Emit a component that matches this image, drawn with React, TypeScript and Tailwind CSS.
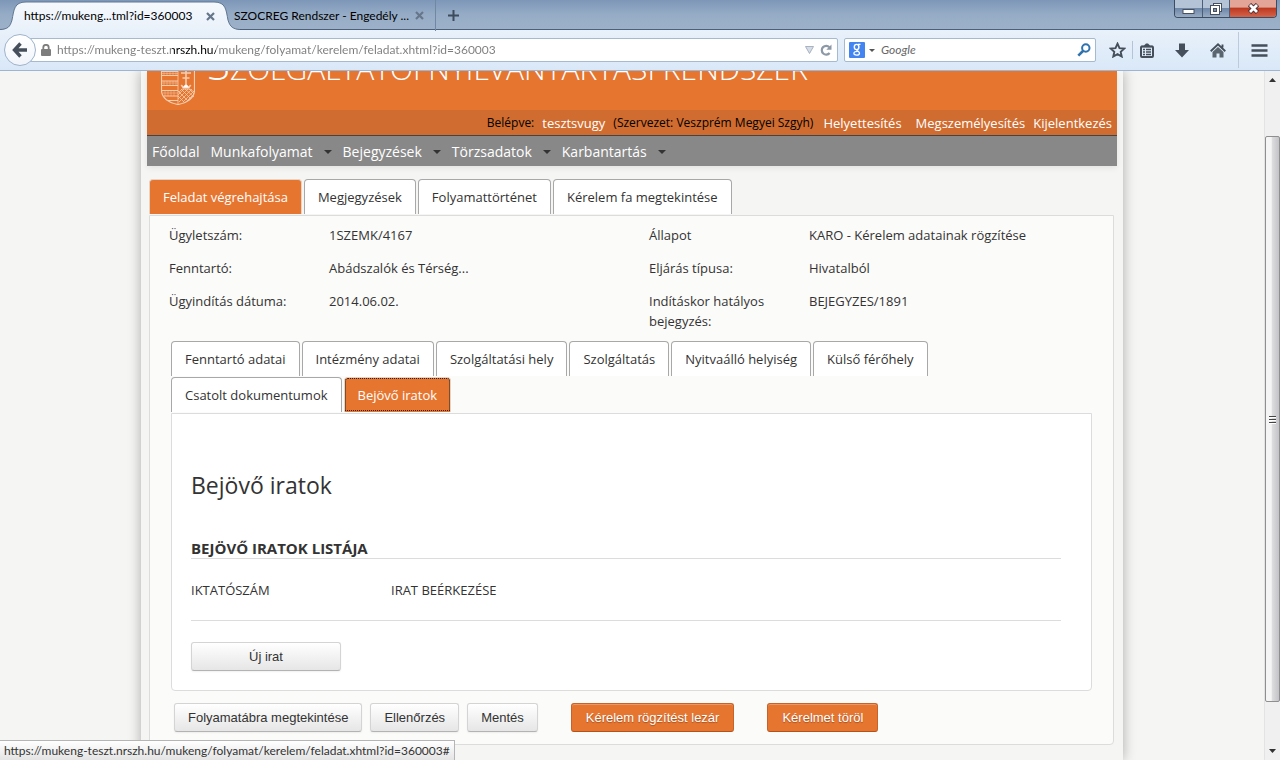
import type { ReactNode } from "react";

const ADDRESS = "https://mukeng-teszt.nrszh.hu/mukeng/folyamat/kerelem/feladat.xhtml?id=360003";

function CloseMark() {
  return (
    <svg width="9" height="9" viewBox="0 0 9 9" aria-hidden="true">
      <path d="M1 1l7 7M8 1l-7 7" stroke="#66768a" strokeWidth="2.2" />
    </svg>
  );
}

function TitleBar() {
  return (
    <div className="flex h-[30px] shrink-0 items-start justify-between border-b border-[#4b617b] bg-linear-to-b from-[#7d97b8] via-[#96acc6] to-[#9db1c9]">
      <div className="flex h-[29px] items-center text-xs leading-4 text-black">
        <div className="relative h-[30px] w-60 shrink-0 self-start">
          <svg className="absolute inset-0" width="240" height="30" viewBox="0 0 240 30" aria-hidden="true">
            <defs>
              <linearGradient id="tab" x1="0" y1="0" x2="0" y2="1">
                <stop offset="0" stopColor="#f5f9fd" />
                <stop offset="1" stopColor="#e9f1fa" />
              </linearGradient>
            </defs>
            <path
              d="M0 30C8 29 10 27 12 20C14 10 14 2 26 2H214C226 2 226 10 228 20C230 27 233 29 240 30Z"
              fill="url(#tab)"
            />
            <path
              d="M0 29.500C8 29 10 27 12 20C14 10 14 2 26 2H214C226 2 226 10 228 20C230 27 233 29 240 29.500"
              fill="none"
              stroke="#5f7690"
            />
          </svg>
          <div className="relative flex h-8 items-center justify-between pr-[25px] pl-6">
            <a href="#tab-1">https://mukeng...tml?id=360003</a>
            <button type="button" aria-label="Lap bezárása">
              <CloseMark />
            </button>
          </div>
        </div>
        <div className="-ml-1.5 flex h-8 w-[202px] items-center justify-between border-r border-[#7188a3] pt-0.5 pr-[11px]">
          <a href="#tab-2" className="whitespace-nowrap">
            SZOCREG Rendszer - Engedély ...
          </a>
          <button type="button" aria-label="Lap bezárása">
            <CloseMark />
          </button>
        </div>
        <button type="button" aria-label="Új lap" className="ml-3 pt-0.5">
          <svg width="11" height="11" viewBox="0 0 11 11" aria-hidden="true">
            <path d="M5.500 0v11M0 5.500h11" stroke="#3d4b5c" strokeWidth="2" />
          </svg>
        </button>
      </div>
      <div className="mr-[3px] flex h-[18px] overflow-hidden rounded-b border border-t-0 border-[#3c4d62]">
        <button
          type="button"
          aria-label="Kis méret"
          className="flex w-7 items-center justify-center border-r border-[#4b5f78] bg-linear-to-b from-[#b4c3d6] from-45% via-[#6f88a8] via-50% to-[#98abc3]"
        >
          <svg width="13" height="10" viewBox="0 0 13 10" aria-hidden="true">
            <rect x="1" y="5.500" width="11" height="4" fill="#fff" stroke="#46505f" />
          </svg>
        </button>
        <button
          type="button"
          aria-label="Előző méret"
          className="flex w-[27px] items-center justify-center border-r border-[#4b5f78] bg-linear-to-b from-[#b4c3d6] from-45% via-[#6f88a8] via-50% to-[#98abc3]"
        >
          <svg width="13" height="13" viewBox="0 0 13 13" aria-hidden="true">
            <rect x="3.500" y="1.500" width="8" height="8" fill="#fff" stroke="#46505f" />
            <rect x="0.500" y="3.500" width="9" height="9" fill="#fff" stroke="#46505f" />
            <rect x="3.500" y="6.500" width="3" height="3" fill="#7f93ad" stroke="#46505f" />
          </svg>
        </button>
        <button
          type="button"
          aria-label="Bezárás"
          className="flex w-[46px] items-center justify-center bg-linear-to-b from-[#e3a597] from-40% via-[#bd3a20] via-50% to-[#d4634a]"
        >
          <svg width="13" height="11" viewBox="0 0 13 11" aria-hidden="true">
            <path d="M2.500 1.500l8 8M10.500 1.500l-8 8" stroke="#4f3038" strokeWidth="4.600" />
            <path d="M3 2l7 7M10 2l-7 7" stroke="#fff" strokeWidth="2.800" />
          </svg>
        </button>
      </div>
    </div>
  );
}

function ToolButton({ label, children }: { label: string; children: ReactNode }) {
  return (
    <button type="button" aria-label={label} className="flex w-5 shrink-0 items-center justify-center">
      {children}
    </button>
  );
}

function Toolbar() {
  return (
    <div className="flex h-[41px] shrink-0 items-center border-b border-[#9db5d0] bg-linear-to-b from-[#e9f1fa] to-[#d9e8f8] pl-1">
      <button
        type="button"
        aria-label="Vissza"
        className="z-10 flex size-8 shrink-0 items-center justify-center rounded-full border border-[#9fb3ca] bg-linear-to-b from-white to-[#f0f5fb]"
      >
        <svg width="16" height="16" viewBox="0 0 16 16" aria-hidden="true">
          <path d="M8.500 1.500L2.500 8l6 6.500M3 8h12" fill="none" stroke="#454f5b" strokeWidth="3.400" />
        </svg>
      </button>
      <div className="-ml-1.5 flex h-6 min-w-0 flex-1 items-center rounded-r-xs border border-[#a5b9cf] bg-white pr-[5px] pl-2.5">
        <svg className="shrink-0" width="10" height="12" viewBox="0 0 10 12" aria-hidden="true">
          <path d="M2.300 6V3.500a2.700 2.700 0 015.400 0V6" fill="none" stroke="#7d7d7d" strokeWidth="1.800" />
          <rect y="5" width="10" height="7" rx="1" fill="#7d7d7d" />
        </svg>
        <input
          type="text"
          aria-label="Cím"
          defaultValue={ADDRESS}
          className="ml-1.5 min-w-0 flex-1 bg-[linear-gradient(to_right,#7c7c7c_115px,#000_115px,#000_159px,#7c7c7c_159px)] bg-clip-text text-xs leading-4 text-transparent outline-none"
        />
        <button type="button" aria-label="Korábbi címek">
          <svg width="9" height="8" viewBox="0 0 9 8" aria-hidden="true">
            <path d="M.5.5h8L4.500 7.500z" fill="#d6dde5" stroke="#a7b3c0" />
          </svg>
        </button>
        <button type="button" aria-label="Frissítés" className="ml-1.5">
          <svg width="12" height="12" viewBox="0 0 12 12" aria-hidden="true">
            <path d="M9.600 9a4.400 4.400 0 11-.2-5.800" fill="none" stroke="#8d99a7" strokeWidth="2.200" />
            <path d="M11.500.5v5.200H6.300z" fill="#8d99a7" />
          </svg>
        </button>
      </div>
      <div className="ml-1.5 flex h-6 w-[252px] shrink-0 items-center rounded-xs border border-[#a5b9cf] bg-white px-1">
        <button type="button" aria-label="Keresőszolgáltatás" className="flex items-center gap-1">
          <svg width="16" height="16" viewBox="0 0 16 16" aria-hidden="true">
            <rect width="16" height="16" rx="1" fill="#4384f0" />
            <ellipse cx="7.600" cy="5" rx="2.300" ry="2.600" fill="none" stroke="#fff" strokeWidth="1.400" />
            <path
              d="M9 2.400h2.500M8.200 7.600c-1.500 1 2.600 1.700 2.300 3.700-.3 2.400-5.600 2.300-5.600.2 0-1.500 1.700-2.100 3.700-2.100"
              fill="none"
              stroke="#fff"
              strokeWidth="1.300"
            />
          </svg>
          <svg width="6" height="3" viewBox="0 0 6 3" aria-hidden="true">
            <path d="M0 0h6L3 3z" fill="#555" />
          </svg>
        </button>
        <input
          type="search"
          aria-label="Keresés"
          placeholder="Google"
          className="ml-1.5 min-w-0 flex-1 text-xs leading-4 italic outline-none placeholder:text-[#666]"
        />
        <button type="button" aria-label="Keresés indítása">
          <svg width="14" height="14" viewBox="0 0 14 14" aria-hidden="true">
            <circle cx="8.800" cy="5" r="3.700" fill="none" stroke="#2f72ad" strokeWidth="2" />
            <path d="M6.200 7.800L1.300 12.600" stroke="#2f72ad" strokeWidth="2.600" />
          </svg>
        </button>
      </div>
      <div className="flex shrink-0 items-center pr-[11px] pl-[11px]">
        <ToolButton label="Könyvjelzőzés">
          <svg width="17" height="16" viewBox="0 0 17 16" aria-hidden="true">
            <path
              d="M8.500 1.700l2 4.400 4.800.5-3.600 3.200 1 4.700-4.200-2.400-4.200 2.400 1-4.700L1.700 6.600l4.800-.5z"
              fill="none"
              stroke="#454f5b"
              strokeWidth="1.900"
            />
          </svg>
        </ToolButton>
        <span className="mr-1 ml-[5px] h-[18px] w-px bg-[#b3c4d7]" />
        <ToolButton label="Könyvjelzők">
          <svg width="14" height="15" viewBox="0 0 14 15" aria-hidden="true">
            <path d="M4 2.500L6 .5h2l2 2v1H4z" fill="#454f5b" />
            <rect x="1" y="3.500" width="12" height="10.500" rx="1" fill="none" stroke="#454f5b" strokeWidth="2" />
            <path d="M1 3.500h12M3 6.500h2M3 9h2M3 11.500h2M6 6.500h5M6 9h5M6 11.500h5" stroke="#454f5b" strokeWidth="1.300" />
          </svg>
        </ToolButton>
        <span className="w-[15px]" />
        <ToolButton label="Letöltések">
          <svg width="14" height="15" viewBox="0 0 14 15" aria-hidden="true">
            <path d="M4 .5h6V7h4l-7 7.500L0 7h4z" fill="#454f5b" />
          </svg>
        </ToolButton>
        <span className="w-4" />
        <ToolButton label="Kezdőlap">
          <svg width="16" height="15" viewBox="0 0 16 15" aria-hidden="true">
            <path d="M.7 8.200L8 1.400l7.300 6.800M12.500 1.500v3" fill="none" stroke="#454f5b" strokeWidth="1.900" />
            <path d="M2.500 9L8 4l5.500 5v5.500H9.500v-4h-3v4h-4z" fill="#5b6570" />
          </svg>
        </ToolButton>
        <span className="mx-2.5 h-9 w-px bg-[#bccbdc]" />
        <ToolButton label="Menü">
          <svg width="17" height="13" viewBox="0 0 17 13" aria-hidden="true">
            <path d="M.5 1.500h16M.5 6.500h16M.5 11.500h16" stroke="#454f5b" strokeWidth="2.600" />
          </svg>
        </ToolButton>
      </div>
    </div>
  );
}

function Crest() {
  return (
    <svg width="34" height="46" viewBox="0 0 34 46" className="shrink-0" aria-hidden="true">
      <g fill="none" stroke="#f6cdaf">
        <path d="M.5 0V31C.5 39 8 44 17 45.500C26 44 33.500 39 33.500 31V0" strokeWidth="1.200" />
        <path d="M17 0v45" strokeWidth=".8" />
        <path d="M1 12.500h16M1 16.500h16M1 22h16M1 26.500h16M1 31.500h16M3 37h14M7 41.500h10" />
        <path
          d="M1 14.500h16M1 24h16M2 34h15M3 12v4M6 12v4M9 12v4M12 12v4M15 12v4M3 22v4M6 22v4M9 22v4M12 22v4M15 22v4M4 32v5M7 32v5M10 32v5M13 32v5"
          strokeWidth=".6"
          opacity=".8"
        />
        <path d="M25 9v18M20 14h10M21.500 19h7" strokeWidth="1.600" />
        <path d="M20 26l2 3h6l2-3-2.500 1.500L25 25l-2.500 2.500z" fill="#fff" />
        <path
          d="M18 33l3-3h8l4 3M17 36l6-6M17 40l10-10M18 43l13-13M22 43l11-11M27 41l6-6M17 32l10 10M20 30l10 10M24 30l9 8M28 30l5 5M17 37l6 6"
          strokeWidth=".8"
        />
      </g>
    </svg>
  );
}

const menu = ["Munkafolyamat", "Bejegyzések", "Törzsadatok", "Karbantartás"];

function SiteHeader() {
  return (
    <header className="shadow-[0_2px_6px_rgba(0,0,0,0.08)]">
      <div className="flex h-[39px] items-end bg-[#e67530] pb-[5px] pl-3.5">
        <Crest />
        <h1 className="ml-3 pb-4 text-3xl leading-10 font-light whitespace-nowrap text-white">
          <span className="text-[42px]">S</span>ZOLGÁLTATÓI NYILVÁNTARTÁSI RENDSZER
        </h1>
      </div>
      <div className="flex h-[26px] items-center justify-end border-b border-[#444] bg-[#d06c2f] pt-px pr-[5px] text-[13px] leading-5 text-white">
        <span className="text-xs text-black">Belépve:</span>
        <a href="#felhasznalo" className="ml-2">tesztsvugy</a>
        <span className="ml-2 text-xs text-black">(Szervezet: Veszprém Megyei Szgyh)</span>
        <a href="#helyettesites" className="ml-2.5">Helyettesítés</a>
        <a href="#megszemelyesites" className="ml-3.5">Megszemélyesítés</a>
        <a href="#kijelentkezes" className="ml-2">Kijelentkezés</a>
      </div>
      <nav className="flex h-[30px] items-center bg-[#888] pt-0.5 pl-[5px] text-sm leading-5 text-white">
        <a href="#fooldal" className="mr-[11px]">Főoldal</a>
        {menu.map((label) => (
          <button key={label} type="button" className="mr-[11px] flex items-center gap-[11px]">
            {label}
            <svg width="8" height="4" viewBox="0 0 8 4" aria-hidden="true">
              <path d="M0 0h8L4 4z" fill="#333" />
            </svg>
          </button>
        ))}
      </nav>
    </header>
  );
}

function Tab({ label, active, focused }: { label: string; active?: boolean; focused?: boolean }) {
  const tone = active
    ? "border-[#e5d3c6] bg-[#e67530] text-white"
    : "border-[#a8a8a8] bg-white text-[#333]";
  const ring = focused ? "outline outline-dotted outline-[#222] -outline-offset-2" : "";
  return (
    <button
      type="button"
      role="tab"
      aria-selected={!!active}
      className={`h-[35px] rounded-t border border-b-0 px-[13px] text-[13px] leading-5 whitespace-nowrap ${tone} ${ring}`}
    >
      {label}
    </button>
  );
}

const facts = [
  ["Ügyletszám:", "1SZEMK/4167"],
  ["Állapot", "KARO - Kérelem adatainak rögzítése"],
  ["Fenntartó:", "Abádszalók és Térség..."],
  ["Eljárás típusa:", "Hivatalból"],
  ["Ügyindítás dátuma:", "2014.06.02."],
  ["Indításkor hatályos bejegyzés:", "BEJEGYZES/1891"],
];

function ActionButton({ label, primary, wide }: { label: string; primary?: boolean; wide?: boolean }) {
  const tone = primary
    ? "border-[#c9622a] border-b-[#b4521d] bg-[#e67530] px-3.5 text-white shadow-[inset_0_1px_0_rgba(255,255,255,0.25)] [text-shadow:0_1px_1px_rgba(0,0,0,0.3)]"
    : "border-[#d4d4d4] border-b-[#b3b3b3] bg-linear-to-b from-white to-[#e6e6e6] px-[13px] text-[#333] shadow-[0_1px_2px_rgba(0,0,0,0.06)]";
  return (
    <button
      type="button"
      className={`h-[29px] rounded-[3px] border font-['Liberation_Sans',sans-serif] text-[13px] leading-5 ${tone} ${wide ? "w-[150px]" : ""}`}
    >
      {label}
    </button>
  );
}

function IncomingDocuments() {
  return (
    <section className="rounded-b border border-[#dcdcdc] bg-white pt-[55px] pr-[30px] pb-[19px] pl-[19px]">
      <h2 className="text-[23px] leading-8">Bejövő iratok</h2>
      <h3 className="mt-[37px] border-b border-[#dcdcdc] text-[15px] leading-5 font-bold uppercase">
        Bejövő iratok listája
      </h3>
      <table className="w-full table-fixed border-b border-[#dcdcdc]">
        <thead>
          <tr className="text-left">
            <th className="w-[200px] pt-[21px] pb-5 font-normal">IKTATÓSZÁM</th>
            <th className="pt-[21px] pb-5 font-normal">IRAT BEÉRKEZÉSE</th>
          </tr>
        </thead>
      </table>
      <div className="mt-[21px] flex">
        <ActionButton label="Új irat" wide />
      </div>
    </section>
  );
}

function TaskPage() {
  return (
    <main className="mx-[2px] mt-[13px] text-[13px] leading-5 text-[#333]">
      <div role="tablist" className="flex flex-wrap gap-x-0.5 pb-px">
        <Tab label="Feladat végrehajtása" active />
        <Tab label="Megjegyzések" />
        <Tab label="Folyamattörténet" />
        <Tab label="Kérelem fa megtekintése" />
      </div>
      <div className="mr-px rounded-b border border-[#dcdcdc] bg-[#fbfbf9] pt-[9px] pb-3">
        <dl className="ml-[19px] grid grid-cols-[160px_320px_160px_1fr] gap-y-[13px]">
          {facts.map(([label, value]) => (
            <div key={label} className="contents">
              <dt className="max-w-[140px]">{label}</dt>
              <dd>{value}</dd>
            </div>
          ))}
        </dl>
        <div className="mx-[21px] mt-2.5">
          <div role="tablist" className="flex flex-wrap gap-x-0.5 gap-y-px pb-px">
            <Tab label="Fenntartó adatai" />
            <Tab label="Intézmény adatai" />
            <Tab label="Szolgáltatási hely" />
            <Tab label="Szolgáltatás" />
            <Tab label="Nyitvaálló helyiség" />
            <Tab label="Külső férőhely" />
            <Tab label="Csatolt dokumentumok" />
            <Tab label="Bejövő iratok" active focused />
          </div>
          <IncomingDocuments />
        </div>
        <div className="mt-3 ml-6 flex gap-[33px]">
          <div className="flex gap-2">
            <ActionButton label="Folyamatábra megtekintése" />
            <ActionButton label="Ellenőrzés" />
            <ActionButton label="Mentés" />
          </div>
          <ActionButton label="Kérelem rögzítést lezár" primary />
          <ActionButton label="Kérelmet töröl" primary />
        </div>
      </div>
    </main>
  );
}

function ScrollRail() {
  return (
    <div className="flex w-4 shrink-0 flex-col items-center border-l border-[#e3e3e3] bg-[#f0f0f0]" aria-hidden="true">
      <svg className="my-[7px]" width="7" height="4" viewBox="0 0 7 4">
        <path d="M0 4h7L3.500 0z" fill="#333" />
      </svg>
      <div className="mt-[47px] mb-10 flex w-full flex-1 items-center justify-center rounded-xs border border-[#8f8f8f] bg-linear-to-r from-[#f5f5f5] from-40% via-[#dcdcde] via-50% to-[#c3c3c8]">
        <svg width="8" height="9" viewBox="0 0 8 9">
          <path d="M0 1.500h7M0 4.500h7M0 7.500h7" stroke="#444" />
          <path d="M0 2.500h7M0 5.500h7M0 8.500h7" stroke="#fff" />
        </svg>
      </div>
      <svg className="my-[7px]" width="7" height="4" viewBox="0 0 7 4">
        <path d="M0 0h7L3.500 4z" fill="#333" />
      </svg>
    </div>
  );
}

export default function App() {
  return (
    <div className="flex h-screen flex-col overflow-hidden">
      <div className="shrink-0 font-['Lato','Noto_Sans',sans-serif]">
        <TitleBar />
        <Toolbar />
      </div>
      <div className="flex min-h-0 flex-1 overflow-hidden bg-[#f5f5f3] font-['Open_Sans','Noto_Sans',sans-serif]">
        <div className="min-w-0 flex-1 overflow-hidden">
          <div className="mx-auto min-h-full max-w-[982px] bg-[#f5f5f3] px-1.5 shadow-[0_0_12px_rgba(0,0,0,0.3)]">
            <SiteHeader />
            <TaskPage />
          </div>
        </div>
        <ScrollRail />
      </div>
      <div className="absolute bottom-0 left-0 h-5 border border-b-0 border-l-0 border-[#b5b5b5] bg-linear-to-b from-white to-[#e4e4e4] px-1 font-['Lato','Noto_Sans',sans-serif] text-xs leading-5 text-[#333]">
        {ADDRESS}#
      </div>
    </div>
  );
}
